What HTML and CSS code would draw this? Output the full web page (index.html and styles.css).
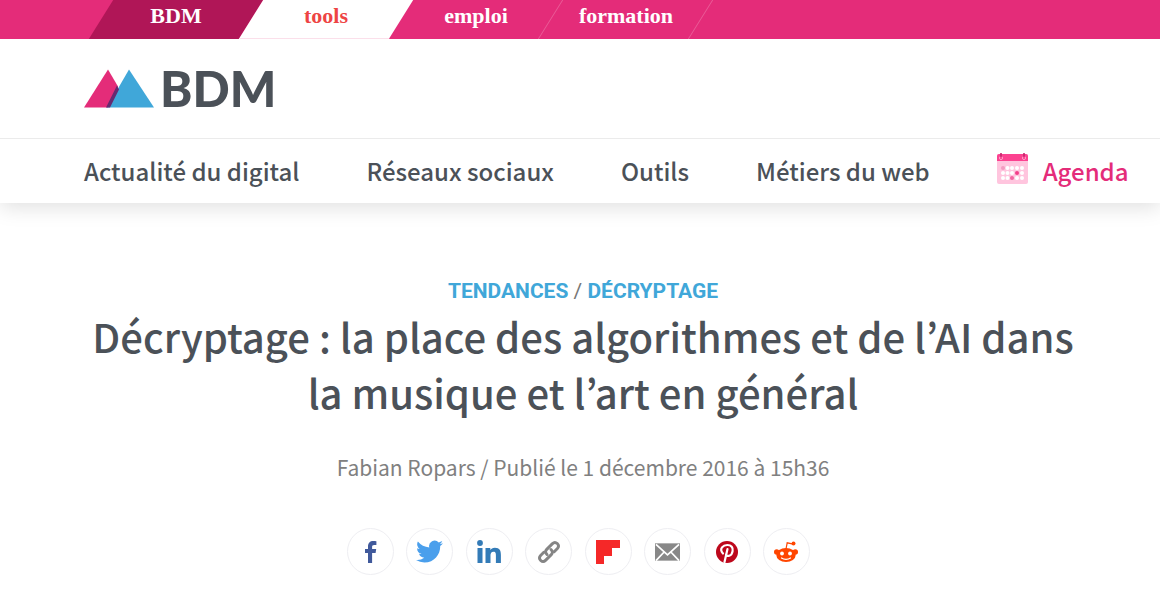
FILE: index.html
```html
<!DOCTYPE html>
<html lang="fr">
<head>
<meta charset="utf-8">
<meta name="viewport" content="width=device-width, initial-scale=1">
<title>Décryptage : la place des algorithmes et de l’AI dans la musique et l’art en général</title>
<link rel="stylesheet" href="styles.css">
</head>
<body>
<nav class="network" aria-label="Sites BDM">
  <a class="tab tab-current" href="#">BDM</a>
  <a class="tab tab-tools" href="#">tools</a>
  <a class="tab" href="#">emploi</a>
  <a class="tab" href="#">formation</a>
</nav>
<header class="header">
  <div class="brand">
    <a class="logo" href="#">
      <svg class="logo-mark" viewBox="0 0 70 38" aria-hidden="true">
        <path fill="#e42c79" d="M24 0 0 38h24L34 17z"/>
        <path fill="#40a7d9" d="M45 0 23 38h47z"/>
        <path fill="#662a70" d="M33 16 22 38h4L35 20z"/>
      </svg>
      <span class="logo-name">BDM</span>
    </a>
  </div>
  <nav class="menu" aria-label="Menu principal">
    <a href="#">Actualité du digital</a>
    <a href="#">Réseaux sociaux</a>
    <a href="#">Outils</a>
    <a href="#">Métiers du web</a>
    <a class="agenda" href="#">
      <svg class="agenda-icon" viewBox="0 0 31 32" aria-hidden="true">
        <rect y="1" width="31" height="30" rx="2" fill="#ffc5de"/>
        <path fill="#fc4290" d="M2 1h27a2 2 0 0 1 2 2v5H0V3a2 2 0 0 1 2-2z"/>
        <g fill="none" stroke="#ff9fc8" stroke-width="1"><circle cx="4" cy="5" r="1.6"/><circle cx="27" cy="5" r="1.6"/></g>
        <path stroke="#c4246b" stroke-width="1.6" d="M4 0v4M27 0v4"/>
        <g fill="#fff"><circle cx="10.500" cy="15" r="2"/><circle cx="15" cy="15" r="2"/><circle cx="20" cy="15" r="2"/><circle cx="25" cy="15" r="2"/><circle cx="6" cy="20" r="2"/><circle cx="10.500" cy="20" r="2"/><circle cx="15" cy="20" r="2"/><circle cx="25" cy="20" r="2"/><circle cx="6" cy="25" r="2"/><circle cx="10.500" cy="25" r="2"/><circle cx="20" cy="25" r="2"/><circle cx="25" cy="25" r="2"/></g>
        <circle cx="6" cy="15" r="2" fill="#f49bc1"/><circle cx="20" cy="20" r="2" fill="#f23f8b"/><circle cx="15" cy="25" r="2" fill="#f266a2"/>
      </svg>
      Agenda
    </a>
  </nav>
</header>
<main class="article">
  <p class="topics"><a href="#">TENDANCES</a> / <a href="#">DÉCRYPTAGE</a></p>
  <h1 class="title">Décryptage : la place des algorithmes et de l’AI dans la musique et l’art en général</h1>
  <p class="byline">Fabian Ropars / Publié le 1 décembre 2016 à 15h36</p>
  <div class="share">
    <a href="#" aria-label="Facebook"><svg viewBox="0 0 24 24"><path fill="#40599b" d="M9 23V13H6V9h3V6.500C9 3 11 1 14.200 1c1.500 0 2.800.1 3.200.2v3.700h-2.200c-1.700 0-2.100.9-2.100 2.100v2h4.100l-.6 4h-3.500v10z"/></svg></a>
    <a href="#" aria-label="Twitter"><svg class="wide" viewBox="0 0 24 24"><path fill="#4a9fec" d="M24 4.600a10 10 0 0 1-2.800.8 5 5 0 0 0 2.100-2.700 10 10 0 0 1-3.100 1.200 4.900 4.900 0 0 0-8.400 4.500A14 14 0 0 1 1.700 3.200a4.900 4.900 0 0 0 1.500 6.500A5 5 0 0 1 1 9.100a4.900 4.900 0 0 0 3.900 4.900 5 5 0 0 1-2.200.1 4.900 4.900 0 0 0 4.600 3.400A9.900 9.900 0 0 1 0 19.500a14 14 0 0 0 7.500 2.200c9.100 0 14.300-7.700 14-14.600A10 10 0 0 0 24 4.600z"/></svg></a>
    <a href="#" aria-label="LinkedIn"><svg viewBox="0 0 24 24"><g fill="#337bb7"><circle cx="3" cy="3" r="2.900"/><path d="M.5 8h5v15h-5zM8.500 8h4.800v2.100c.7-1.300 2.300-2.400 4.600-2.400 4.900 0 6 3 6 7.200V23h-5v-7.300c0-1.800 0-4-2.400-4-2.500 0-3 1.900-3 3.900V23h-5z"/></g></svg></a>
    <a href="#" aria-label="Copier le lien"><svg viewBox="0 0 24 24"><g fill="none" stroke="#858585" stroke-width="2.900" stroke-linecap="round" stroke-linejoin="round"><path d="M10 14.500c-2-2-1.600-3.800-.3-5.100l5.800-5.800c3.100-3.100 8 1.400 4.900 4.900l-3.200 3.200"/><path d="M14 9.500c2 2 1.600 3.800.3 5.100l-5.800 5.800c-3.100 3.100-8-1.400-4.900-4.900l3.200-3.200"/></g></svg></a>
    <a href="#" aria-label="Flipboard"><svg viewBox="0 0 24 24"><path fill="#f52828" d="M0 0h24v8h-8v8H8v8H0z"/></svg></a>
    <a href="#" aria-label="E-mail"><svg class="mail" viewBox="0 0 26 24"><path fill="#888" d="M0 3h26v18H0z"/><path fill="none" stroke="#fff" stroke-width="1.800" d="m1 4 12 11L25 4M1 21l8.500-9M25 21l-8.500-9"/></svg></a>
    <a href="#" aria-label="Pinterest"><svg viewBox="0 0 24 24"><circle cx="12" cy="12" r="11" fill="#bd081c"/><path fill="none" stroke="#fff" stroke-width="2.200" stroke-linecap="round" d="M12.500 9 9.500 22M8 13.500C3.500 8.500 8.500 5 12.300 5c4 0 6 2.700 5.300 6.100-.9 5.500-5.900 6-6.600 3.200"/></svg></a>
    <a href="#" aria-label="Reddit"><svg viewBox="0 0 24 24"><g fill="#ff4500"><ellipse cx="12" cy="15" rx="9.700" ry="7"/><circle cx="2.700" cy="12" r="2.700"/><circle cx="21.300" cy="12" r="2.700"/><circle cx="19.500" cy="3.500" r="2"/></g><path fill="none" stroke="#ff4500" stroke-width="1.200" d="m12 9 1.200-6.200 5 1"/><circle cx="8" cy="13.500" r="1.900" fill="#fff"/><circle cx="16" cy="13.500" r="1.900" fill="#fff"/><path fill="none" stroke="#fff" stroke-width="1.200" stroke-linecap="round" d="M7.500 18c2.500 1.800 6.500 1.800 9 0"/></svg></a>
  </div>
</main>
</body>
</html>
```
FILE: styles.css
```css
* { box-sizing: border-box; }
body {
  margin: 0;
  background: #fff;
  color: #4b5158;
  font-family: "Noto Sans CJK JP", "Noto Sans", sans-serif;
}
a { color: inherit; text-decoration: none; }

.network {
  position: relative;
  z-index: 1;
  display: flex;
  height: 39px;
  padding-left: 101px;
  background: #e42c79;
  overflow: hidden;
}
.tab {
  position: relative;
  z-index: 0;
  width: 150px;
  color: #fff;
  font: bold 22px/32px "Liberation Serif", serif;
  text-align: center;
}
.tab::before {
  content: "";
  position: absolute;
  z-index: -1;
  inset: 0;
  border-right: 1px solid #ea5c98;
  transform: skewX(-32deg);
}
.tab-current::before { background: #b01657; border: 0; }
.tab-tools { color: #ee4444; }
.tab-tools::before { background: #fff; border: 0; border-bottom: 1px solid #fbdfea; }

.header { box-shadow: 0 4px 20px rgba(0, 0, 0, 0.13); }
.brand { padding: 30px 84px; border-bottom: 1px solid #ebebeb; }
.logo { display: flex; width: max-content; gap: 6px; }
.logo-mark { width: 70px; height: 39px; }
.logo-name { font: 900 49px/39px Lato, sans-serif; }
.menu {
  display: flex;
  gap: 67px;
  padding: 0 32px 0 84px;
  font-size: 24px;
  font-weight: 500;
  line-height: 64px;
  white-space: nowrap;
}
.agenda { display: flex; gap: 15px; color: #e42c79; }
.agenda-icon { width: 31px; height: 32px; margin-top: 14px; }

.article { padding: 72px 78px 32px 84px; text-align: center; }
.topics {
  margin: 0;
  color: #777;
  font: 21px/32px Roboto, sans-serif;
}
.topics a { color: #40a7d9; font-weight: 700; }
.title {
  margin: 1px 0 0;
  font-size: 40px;
  font-weight: 500;
  line-height: 56px;
}
.byline {
  margin: 31px 0 0;
  color: #808080;
  font-size: 21px;
  line-height: 32px;
}
.share {
  display: flex;
  justify-content: space-between;
  max-width: 472px;
  margin: 45px auto 0;
  padding-right: 9px;
}
.share a {
  display: grid;
  place-items: center;
  width: 47px;
  height: 47px;
  border: 1px solid #eeeef2;
  border-radius: 50%;
}
.share svg { width: 24px; height: 24px; }
.share .wide { width: 27px; height: 27px; }
.share .mail { width: 25px; height: 24px; }
```
